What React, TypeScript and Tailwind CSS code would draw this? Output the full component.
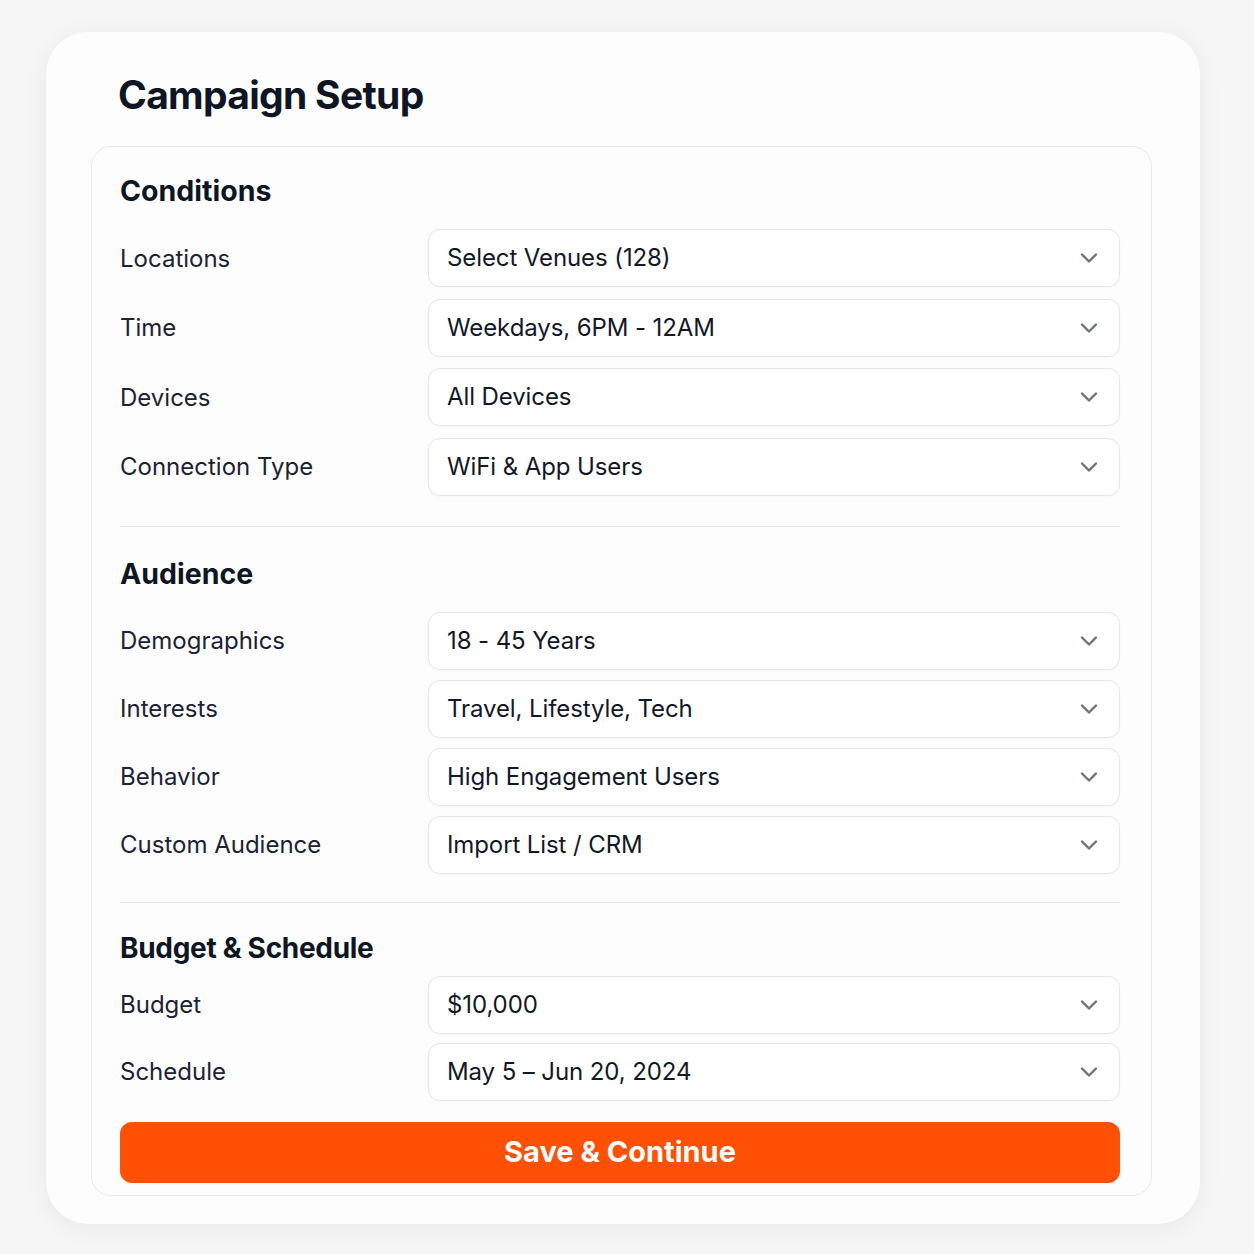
import React from 'react';

type Row = { label: string; value: string };

const conditions: Row[] = [
  { label: 'Locations', value: 'Select Venues (128)' },
  { label: 'Time', value: 'Weekdays, 6PM - 12AM' },
  { label: 'Devices', value: 'All Devices' },
  { label: 'Connection Type', value: 'WiFi & App Users' },
];

const audience: Row[] = [
  { label: 'Demographics', value: '18 - 45 Years' },
  { label: 'Interests', value: 'Travel, Lifestyle, Tech' },
  { label: 'Behavior', value: 'High Engagement Users' },
  { label: 'Custom Audience', value: 'Import List / CRM' },
];

const budget: Row[] = [
  { label: 'Budget', value: '$10,000' },
  { label: 'Schedule', value: 'May 5 – Jun 20, 2024' },
];

function Chevron() {
  return (
    <svg width="18" height="12" viewBox="0 0 18 12" fill="none" className="shrink-0">
      <path d="M2 2.5 L9 9.5 L16 2.5" stroke="#6b7280" strokeWidth="2.4" strokeLinecap="round" strokeLinejoin="round" />
    </svg>
  );
}

function SelectRow({ row }: { row: Row }) {
  return (
    <div className="flex items-center">
      <div className="w-[308px] pt-px text-[24px] text-[#1a2233]">{row.label}</div>
      <div className="flex h-[58px] w-[692px] items-center justify-between rounded-[12px] border border-[#e6e7eb] bg-white pl-[18px] pr-[21px] shadow-[0_1px_2px_rgba(0,0,0,0.03)]">
        <span className="text-[24px] tracking-[-0.1px] text-[#111827]">{row.value}</span>
        <Chevron />
      </div>
    </div>
  );
}

export default function App() {
  return (
    <div className="min-h-[1254px] bg-[#f6f6f7] pl-[46px] pt-[32px]" style={{ fontFamily: 'Inter, "Noto Sans", sans-serif' }}>
      <div className="w-[1154px] rounded-[42px] bg-[#fdfdfd] pb-[28px] pl-[45px] pr-[48px] pt-[39px] shadow-[0_4px_24px_rgba(0,0,0,0.06)]">
        <h1 className="pl-[27px] text-[39px] font-bold leading-[48px] tracking-[-0.7px] text-[#0f1623]">Campaign Setup</h1>

        <div className="mt-[27px] rounded-[20px] border border-[#e8e9ec] bg-[#fdfdfd] pb-[12px] pl-[28px] pr-[31px] pt-[26px]">
          <h2 className="text-[28.5px] font-bold leading-[36px] text-[#0f1623]">Conditions</h2>
          <div className="mt-[20px] flex flex-col gap-[11.5px]">
            {conditions.map((r) => (
              <SelectRow key={r.label} row={r} />
            ))}
          </div>

          <div className="mt-[30px] h-px bg-[#e6e8ec]" />

          <h2 className="mt-[29px] text-[28.5px] font-bold leading-[36px] text-[#0f1623]">Audience</h2>
          <div className="mt-[20px] flex flex-col gap-[10px]">
            {audience.map((r) => (
              <SelectRow key={r.label} row={r} />
            ))}
          </div>

          <div className="mt-[28px] h-px bg-[#e6e8ec]" />

          <h2 className="mt-[27px] text-[28px] font-bold leading-[36px] tracking-[-0.3px] text-[#0f1623]">Budget &amp; Schedule</h2>
          <div className="mt-[10px] flex flex-col gap-[9px]">
            {budget.map((r) => (
              <SelectRow key={r.label} row={r} />
            ))}
          </div>

          <button className="mt-[21px] flex h-[61px] w-[1000px] items-center justify-center rounded-[12px] bg-[#ff5004] text-[29px] font-bold text-white">
            Save &amp; Continue
          </button>
        </div>
      </div>
    </div>
  );
}
